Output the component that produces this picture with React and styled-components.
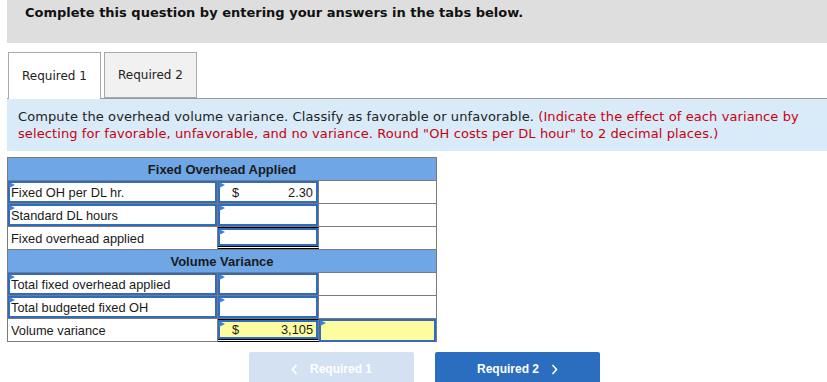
import React from 'react'
import styled, { createGlobalStyle, css } from 'styled-components'

const Global = createGlobalStyle`
    html, body {
        margin: 0;
        padding: 0;
        background: #fff;
    }
    body {
        font-family: "DejaVu Sans", Verdana, sans-serif;
        color: #222;
    }
`

const Page = styled.div`
    width: 827px;
    padding-left: 7px;
    box-sizing: border-box;
`

const Prompt = styled.div`
    height: 43px;
    background: #dedede;
    padding: 5px 0 0 18px;
    box-sizing: border-box;
    font-size: 13px;
    font-weight: bold;
    color: #111;
`

const TabBar = styled.div`
    display: flex;
    align-items: flex-end;
    gap: 3px;
    margin-top: 8px;
    height: 47px;
    border-bottom: 1px solid #9a9a9a;
    padding-left: 1px;
`

const Tab = styled.div`
    width: 93px;
    height: ${p => (p.$active ? '47px' : '46px')};
    box-sizing: border-box;
    border: 1px solid #a9a9a9;
    border-bottom: ${p => (p.$active ? 'none' : '1px solid #a9a9a9')};
    background: ${p => (p.$active ? '#fff' : '#f1f1f1')};
    margin-bottom: ${p => (p.$active ? '-1px' : '0')};
    display: flex;
    align-items: center;
    justify-content: center;
    font-size: 12px;
    color: #222;
`

const Instructions = styled.div`
    background: #d9ebf9;
    height: 52px;
    padding: 9px 0 0 11px;
    box-sizing: border-box;
    font-size: 13px;
    letter-spacing: 0.1px;
    line-height: 17px;
    color: #222;
    .note {
        color: #c8000f;
    }
`

const Sheet = styled.div`
    width: 428px;
    margin-top: 6px;
    border: 1px solid #7b7b7b;
    font-family: "Liberation Sans", Arial, sans-serif;
    font-size: 12.8px;
    color: #1a1a1a;
`

const Band = styled.div`
    height: 22px;
    background: #6ea6e6;
    border-bottom: 1px solid #7b7b7b;
    display: flex;
    align-items: center;
    justify-content: center;
    font-weight: bold;
    font-size: 13px;
    color: #1b1b1b;
`

const Line = styled.div`
    display: grid;
    grid-template-columns: 210px 101px 1fr;
    height: 22px;
    border-bottom: 1px solid #7b7b7b;
    &:last-child {
        border-bottom: none;
    }
`

const Cell = styled.div`
    display: flex;
    box-sizing: border-box;
    border-right: 1px solid #7b7b7b;
    &:last-child {
        border-right: none;
    }
    ${p => p.$rule && css`
        border-top: 1px solid #000;
        border-bottom: 3px double #000;
    `}
`

const Label = styled.div`
    flex: 1;
    display: flex;
    align-items: center;
    padding-left: 3px;
`

const Field = styled.div`
    position: relative;
    flex: 1;
    display: flex;
    align-items: center;
    box-sizing: border-box;
    border: 2px solid #2f6cc0;
    background: ${p => (p.$yellow ? '#fdfda0' : '#fff')};
    padding: 0 3px 0 ${p => (p.$plain ? '1px' : '12px')};
    &::before {
        content: '';
        position: absolute;
        top: -1px;
        left: -1px;
        border-left: 6px solid #3a7fd9;
        border-top: 3.5px solid transparent;
        border-bottom: 3.5px solid transparent;
    }
    .amount {
        margin-left: auto;
    }
`

const Buttons = styled.div`
    display: flex;
    gap: 21px;
    margin: 10px 0 0 242px;
`

const NavButton = styled.div`
    width: 165px;
    height: 34px;
    border-radius: 2px;
    background: ${p => (p.$disabled ? '#d3e1f3' : '#2b6dbf')};
    color: #fff;
    display: flex;
    align-items: center;
    justify-content: center;
    gap: 12px;
    font-family: "Liberation Sans", Arial, sans-serif;
    font-size: 12px;
    font-weight: bold;
    svg {
        display: block;
    }
`

const Chevron = ({ left }) => (
    <svg width="7" height="11" viewBox="0 0 7 11">
        <path
            d={left ? 'M5.5 1 L1.5 5.5 L5.5 10' : 'M1.5 1 L5.5 5.5 L1.5 10'}
            fill="none"
            stroke="#fff"
            strokeWidth="1.6"
        />
    </svg>
)

// one worksheet line: label, amount, and a third column
const Row = ({ label, pickLabel, value, rule, yellow, extra }) => (
    <Line>
        <Cell>
            {pickLabel ? <Field $plain>{label}</Field> : <Label>{label}</Label>}
        </Cell>
        <Cell $rule={rule}>
            <Field $yellow={yellow}>
                {value && <span>$</span>}
                {value && <span className="amount">{value}</span>}
            </Field>
        </Cell>
        <Cell>
            {extra && <Field $yellow $plain />}
        </Cell>
    </Line>
)

export default function App() {
    return (
        <Page>
            <Global />
            <Prompt>Complete this question by entering your answers in the tabs below.</Prompt>
            <TabBar>
                <Tab $active>Required 1</Tab>
                <Tab>Required 2</Tab>
            </TabBar>
            <Instructions>
                Compute the overhead volume variance. Classify as favorable or unfavorable.{' '}
                <span className="note">
                    (Indicate the effect of each variance by selecting for favorable, unfavorable, and no
                    variance. Round "OH costs per DL hour" to 2 decimal places.)
                </span>
            </Instructions>
            <Sheet>
                <Band>Fixed Overhead Applied</Band>
                <Row pickLabel label="Fixed OH per DL hr." value="2.30" />
                <Row pickLabel label="Standard DL hours" />
                <Row label="Fixed overhead applied" rule />
                <Band>Volume Variance</Band>
                <Row pickLabel label="Total fixed overhead applied" />
                <Row pickLabel label="Total budgeted fixed OH" />
                <Row label="Volume variance" value="3,105" rule yellow extra />
            </Sheet>
            <Buttons>
                <NavButton $disabled>
                    <Chevron left />
                    Required 1
                </NavButton>
                <NavButton>
                    Required 2
                    <Chevron />
                </NavButton>
            </Buttons>
        </Page>
    )
}
